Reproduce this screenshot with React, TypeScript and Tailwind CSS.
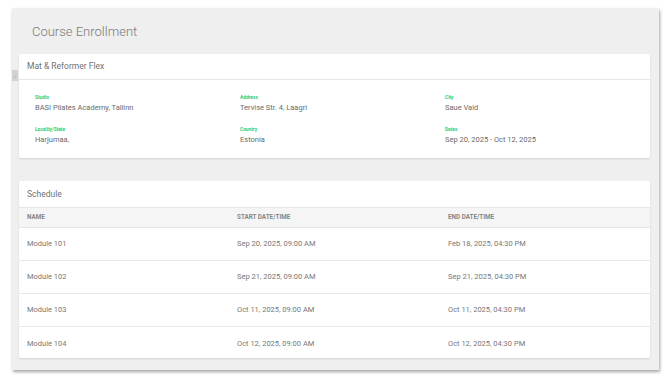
import React from "react";

const fields = [
  { label: "Studio", value: "BASI Pilates Academy, Tallinn" },
  { label: "Address", value: "Tervise Str. 4, Laagri" },
  { label: "City", value: "Saue Vald" },
  { label: "Locality/State", value: "Harjumaa," },
  { label: "Country", value: "Estonia" },
  { label: "Dates", value: "Sep 20, 2025 - Oct 12, 2025" },
];

const rows = [
  ["Module 101", "Sep 20, 2025, 09:00 AM", "Feb 18, 2025, 04:30 PM"],
  ["Module 102", "Sep 21, 2025, 09:00 AM", "Sep 21, 2025, 04:30 PM"],
  ["Module 103", "Oct 11, 2025, 09:00 AM", "Oct 11, 2025, 04:30 PM"],
  ["Module 104", "Oct 12, 2025, 09:00 AM", "Oct 12, 2025, 04:30 PM"],
];

export default function App() {
  return (
    <div
      className="w-[669px] h-[383px] bg-white pt-[8px] pl-[12px] relative antialiased"
      style={{ fontFamily: "Roboto, 'Liberation Sans', sans-serif" }}
    >
      <div className="w-[647px] h-[362px] bg-[#efefef] shadow-[1px_2px_3px_rgba(0,0,0,0.35)] pl-[7px] pr-[9px] flex flex-col relative">
        <div className="absolute left-0 top-[62px] w-[6px] h-[11px] bg-[#d2d2d2] flex items-center justify-center text-[6px] text-[#9a9a9a] leading-none">
          ‹
        </div>
        <div className="h-[46px] flex items-center pl-[13px]">
          <h1 className="text-[13px] font-light text-[#7a7a7a] leading-none">Course Enrollment</h1>
        </div>
        <div className="bg-white rounded-[2px] shadow-[0_1px_2px_rgba(0,0,0,0.12)] h-[104px]">
          <div className="h-[26px] border-b border-[#e6e6e6] flex items-center pl-[8px] text-[8.5px] text-[#727272]">
            Mat &amp; Reformer Flex
          </div>
          <div className="grid grid-cols-3 pl-[16px] pt-[15px] gap-y-[14px]">
            {fields.map((f) => (
              <div key={f.label} className="flex flex-col">
                <span className="text-[4.8px] font-bold text-[#2ecc71] leading-[6px]">{f.label}</span>
                <span className="text-[7.5px] text-[#6a6a6a] leading-[10px] mt-[2px]">{f.value}</span>
              </div>
            ))}
          </div>
        </div>
        <div className="bg-white rounded-[2px] shadow-[0_1px_2px_rgba(0,0,0,0.12)] mt-[23px] h-[177px] overflow-hidden">
          <div className="h-[26px] flex items-center pl-[8px] text-[8.5px] text-[#727272]">Schedule</div>
          <div className="h-[21px] bg-[#f5f5f5] border-t border-b border-[#e6e6e6] flex items-center pl-[8px] text-[6.3px] font-bold text-[#858585]">
            <div className="w-[210px]">NAME</div>
            <div className="w-[211px]">START DATE/TIME</div>
            <div>END DATE/TIME</div>
          </div>
          {rows.map((r, i) => (
            <div
              key={r[0]}
              className={`h-[33px] flex items-center pl-[8px] text-[7.5px] text-[#777777] ${i < rows.length - 1 ? "border-b border-[#e8e8e8]" : ""}`}
            >
              <div className="w-[210px]">{r[0]}</div>
              <div className="w-[211px]">{r[1]}</div>
              <div>{r[2]}</div>
            </div>
          ))}
        </div>
      </div>
    </div>
  );
}
